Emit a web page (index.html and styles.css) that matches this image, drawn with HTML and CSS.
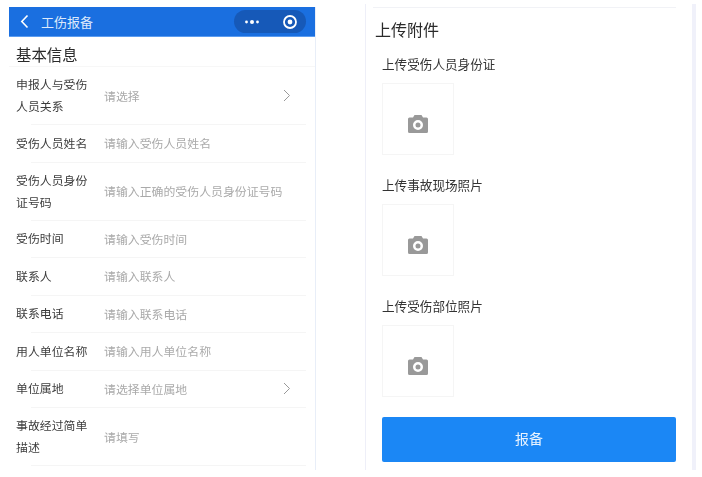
FILE: index.html
```html
<!DOCTYPE html>
<html lang="zh">
<head>
<meta charset="utf-8">
<title>工伤报备</title>
<link rel="stylesheet" href="styles.css">
</head>
<body>
<main class="page">
  <section class="phone left">
    <header class="nav">
      <svg class="back" width="9" height="15" viewBox="0 0 9 15"><path d="M7.500 1.500 1.800 7.500l5.700 6" fill="none" stroke="#fff" stroke-width="1.600"/></svg>
      <span class="nav-title">工伤报备</span>
      <div class="capsule">
        <svg width="16" height="6" viewBox="0 0 16 6"><circle cx="2.500" cy="3" r="1.400" fill="#fff"/><circle cx="8" cy="3" r="2" fill="#fff"/><circle cx="13.500" cy="3" r="1.400" fill="#fff"/></svg>
        <svg width="16" height="16" viewBox="0 0 16 16"><circle cx="8" cy="8" r="6" fill="none" stroke="#fff" stroke-width="1.800"/><circle cx="8" cy="8" r="2.400" fill="#fff"/></svg>
      </div>
    </header>
    <h2 class="section-title">基本信息</h2>
    <div class="form">
      <div class="row tall"><div class="label">申报人与受伤人员关系</div><div class="value">请选择</div><svg class="chev" width="8" height="13" viewBox="0 0 8 13"><path d="M1 1l5.500 5.500L1 12" fill="none" stroke="#999" stroke-width="1"/></svg></div>
      <div class="row"><div class="label">受伤人员姓名</div><div class="value">请输入受伤人员姓名</div></div>
      <div class="row tall"><div class="label">受伤人员身份证号码</div><div class="value">请输入正确的受伤人员身份证号码</div></div>
      <div class="row"><div class="label">受伤时间</div><div class="value">请输入受伤时间</div></div>
      <div class="row"><div class="label">联系人</div><div class="value">请输入联系人</div></div>
      <div class="row"><div class="label">联系电话</div><div class="value">请输入联系电话</div></div>
      <div class="row"><div class="label">用人单位名称</div><div class="value">请输入用人单位名称</div></div>
      <div class="row"><div class="label">单位属地</div><div class="value">请选择单位属地</div><svg class="chev" width="8" height="13" viewBox="0 0 8 13"><path d="M1 1l5.500 5.500L1 12" fill="none" stroke="#999" stroke-width="1"/></svg></div>
      <div class="row tall"><div class="label">事故经过简单描述</div><div class="value">请填写</div></div>
    </div>
  </section>
  <section class="phone right">
    <h2 class="upload-title">上传附件</h2>
    <div class="upload">
      <div class="upload-label">上传受伤人员身份证</div>
      <div class="upload-box"><svg width="20" height="18" viewBox="0 0 20 18"><path d="M6.500 0h7L15 2.500h3.500A1.500 1.500 0 0 1 20 4v12.500a1.500 1.500 0 0 1-1.500 1.500H1.500A1.500 1.500 0 0 1 0 16.500V4a1.500 1.500 0 0 1 1.500-1.500H5zM10 5a5 5 0 1 0 0 10 5 5 0 0 0 0-10zm0 2.500a2.500 2.500 0 1 1 0 5 2.500 2.500 0 0 1 0-5z" fill="#999" fill-rule="evenodd"/></svg></div>
    </div>
    <div class="upload">
      <div class="upload-label">上传事故现场照片</div>
      <div class="upload-box"><svg width="20" height="18" viewBox="0 0 20 18"><path d="M6.500 0h7L15 2.500h3.500A1.500 1.500 0 0 1 20 4v12.500a1.500 1.500 0 0 1-1.500 1.500H1.500A1.500 1.500 0 0 1 0 16.500V4a1.500 1.500 0 0 1 1.500-1.500H5zM10 5a5 5 0 1 0 0 10 5 5 0 0 0 0-10zm0 2.500a2.500 2.500 0 1 1 0 5 2.500 2.500 0 0 1 0-5z" fill="#999" fill-rule="evenodd"/></svg></div>
    </div>
    <div class="upload">
      <div class="upload-label">上传受伤部位照片</div>
      <div class="upload-box"><svg width="20" height="18" viewBox="0 0 20 18"><path d="M6.500 0h7L15 2.500h3.500A1.500 1.500 0 0 1 20 4v12.500a1.500 1.500 0 0 1-1.500 1.500H1.500A1.500 1.500 0 0 1 0 16.500V4a1.500 1.500 0 0 1 1.500-1.500H5zM10 5a5 5 0 1 0 0 10 5 5 0 0 0 0-10zm0 2.500a2.500 2.500 0 1 1 0 5 2.500 2.500 0 0 1 0-5z" fill="#999" fill-rule="evenodd"/></svg></div>
    </div>
    <button class="submit">报备</button>
  </section>
</main>
</body>
</html>
```
FILE: styles.css
```css
* { box-sizing: border-box; }
html, body { margin: 0; padding: 0; background: #fff; }
body {
  width: 702px;
  height: 477px;
  overflow: hidden;
  font-family: "Noto Sans CJK SC", "Liberation Sans", sans-serif;
  color: #333;
}
.page {
  display: flex;
  gap: 49px;
  padding: 7px 0 0 9px;
  align-items: flex-start;
  filter: blur(0.35px);
}
.left {
  flex: none;
  width: 307px;
  height: 463px;
  border-right: 1px solid #e8eef8;
}
.right {
  flex: none;
  width: 331px;
  height: 466px;
  margin-top: -3px;
  padding: 3px 14px 0 9px;
  border-left: 1px solid #eeeff8;
  border-right: 4px solid #f0f1fa;
}
.right::before {
  content: "";
  display: block;
  height: 1px;
  background: #f1f2f6;
  margin: 0 2px 0 -2px;
}
.nav {
  height: 30px;
  background: #1a6fe0;
  display: flex;
  align-items: center;
  padding: 0 9px 0 11px;
  border-bottom: 1px solid #5b9cf0;
}
.back { flex: none; }
.nav-title {
  flex: 1;
  margin-left: 12px;
  font-size: 13px;
  color: #dce9fb;
}
.capsule {
  width: 72px;
  height: 23px;
  border-radius: 12px;
  background: #1659b8;
  display: flex;
  align-items: center;
  justify-content: space-between;
  padding: 0 8px 0 10px;
}
.section-title {
  margin: 0;
  height: 30px;
  padding: 7px 0 0 7px;
  font-size: 15.400px;
  line-height: 20px;
  font-weight: 400;
  color: #2a2a2a;
  border-bottom: 1px solid #f7f7f7;
}
.row {
  position: relative;
  height: 37.500px;
  display: flex;
  align-items: center;
  padding: 0 24px 2px 7px;
}
.row::after {
  content: "";
  position: absolute;
  left: 22px;
  right: 9px;
  bottom: 0;
  height: 1px;
  background: #f5f5f5;
}
.row.tall { height: 58px; }
.label {
  width: 88px;
  flex: none;
  padding-right: 15px;
  font-size: 11.900px;
  line-height: 22px;
  color: #3c3c3c;
}
.value {
  flex: 1;
  font-size: 11.900px;
  color: #aaa;
  white-space: nowrap;
}
.upload-title {
  margin: 0;
  padding-top: 10px;
  height: 46px;
  font-size: 16px;
  line-height: 22px;
  font-weight: 400;
  color: #2a2a2a;
}
.upload {
  padding-left: 7px;
  height: 121px;
}
.upload-label {
  font-size: 12.600px;
  line-height: 20px;
  color: #333;
  margin-bottom: 9px;
}
.upload-box {
  width: 72px;
  height: 72px;
  border: 1px solid #f5f5f5;
  display: flex;
  align-items: center;
  justify-content: center;
  padding-top: 9px;
}
.submit {
  display: block;
  width: 294px;
  height: 45px;
  margin: 0 0 0 7px;
  padding: 0 0 3px;
  border: 0;
  border-radius: 2px;
  background: #1b87f5;
  color: #e8f3ff;
  font-family: inherit;
  font-size: 14px;
}
```
